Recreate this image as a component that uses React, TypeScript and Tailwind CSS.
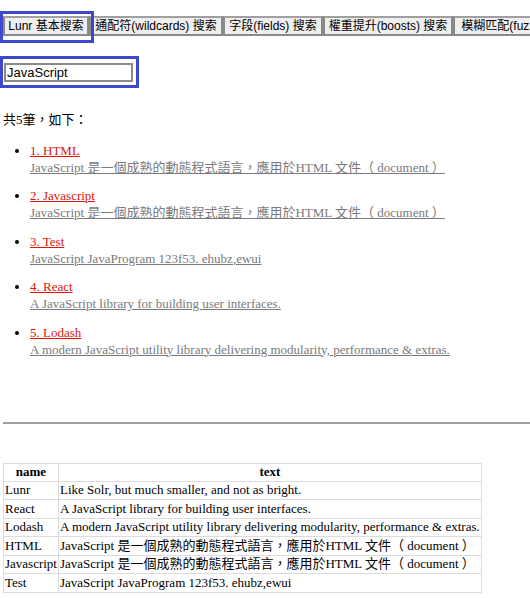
import React from "react";

const serif = { fontFamily: '"Liberation Serif", "Noto Sans CJK TC", serif' };
const sans = { fontFamily: '"Liberation Sans", "Noto Sans CJK TC", sans-serif' };

const items = [
  { t: "1. HTML", d: "JavaScript 是一個成熟的動態程式語言，應用於HTML 文件（ document ）" },
  { t: "2. Javascript", d: "JavaScript 是一個成熟的動態程式語言，應用於HTML 文件（ document ）" },
  { t: "3. Test", d: "JavaScript JavaProgram 123f53. ehubz,ewui" },
  { t: "4. React", d: "A JavaScript library for building user interfaces." },
  { t: "5. Lodash", d: "A modern JavaScript utility library delivering modularity, performance & extras." },
];

const rows = [
  ["Lunr", "Like Solr, but much smaller, and not as bright."],
  ["React", "A JavaScript library for building user interfaces."],
  ["Lodash", "A modern JavaScript utility library delivering modularity, performance & extras."],
  ["HTML", "JavaScript 是一個成熟的動態程式語言，應用於HTML 文件（ document ）"],
  ["Javascript", "JavaScript 是一個成熟的動態程式語言，應用於HTML 文件（ document ）"],
  ["Test", "JavaScript JavaProgram 123f53. ehubz,ewui"],
];

const tabs: [string, string][] = [
  ["Lunr 基本搜索", "w-[86px]"],
  ["通配符(wildcards) 搜索", "w-[134px]"],
  ["字段(fields) 搜索", "w-[100px]"],
  ["權重提升(boosts) 搜索", "w-[130px]"],
  ["模糊匹配(fuzzy) 搜索", "w-[128px]"],
];

export default function App() {
  return (
    <div className="relative w-[530px] h-[598px] overflow-hidden bg-white text-black text-[13px]" style={serif}>
      <div className="flex flex-col px-[3px] pt-[16px]">
        <div className="flex flex-nowrap whitespace-nowrap">
          {tabs.map(([t, w]) => (
            <button
              key={t}
              className={`${w} shrink-0 h-[20px] px-0 overflow-hidden border-2 border-[#8a8a8a] border-t-[#a0a0a0] bg-[#efefef] text-[12px] leading-[16px] text-black text-center`}
              style={sans}
            >
              {t}
            </button>
          ))}
        </div>
        <div className="mt-[27px] pl-[1px]">
          <input
            readOnly
            value="JavaScript"
            className="w-[129px] h-[19px] border-2 border-[#8a8a8a] px-[1px] text-[13px] leading-[15px] outline-none"
            style={sans}
          />
        </div>
        <p className="mt-[28px] leading-[17px]">共5筆，如下：</p>
        <ul className="mt-[14px] list-disc pl-[27px] flex flex-col gap-[11.5px]">
          {items.map((it) => (
            <li key={it.t} className="leading-[17px]">
              <a className="underline text-[#e0140a]">{it.t}</a>
              <br />
              <a className="underline text-[#7a7a7a]">{it.d}</a>
            </li>
          ))}
        </ul>
        <hr className="mt-[64px] -mr-[3px] border-0 border-t-2 border-[#a0a0a0]" />
        <table className="mt-[39px] border-collapse w-[478px] border border-[#dcdcdc]">
          <thead>
            <tr>
              <th className="border border-[#dcdcdc] h-[18px] px-[1px] font-bold text-center w-[57px] leading-[16px]">name</th>
              <th className="border border-[#dcdcdc] h-[18px] px-[1px] font-bold text-center leading-[16px]">text</th>
            </tr>
          </thead>
          <tbody>
            {rows.map((r) => (
              <tr key={r[0]}>
                <td className="border border-[#dcdcdc] h-[18.5px] px-[1px] leading-[16px] whitespace-nowrap">{r[0]}</td>
                <td className="border border-[#dcdcdc] h-[18.5px] px-[1px] leading-[16px] whitespace-nowrap">{r[1]}</td>
              </tr>
            ))}
          </tbody>
        </table>
      </div>
      <div className="absolute left-0 top-[11px] w-[94px] h-[32px] border-[3.5px] border-[#3f47cc] pointer-events-none" />
      <div className="absolute left-0 top-[56px] w-[139px] h-[32px] border-[3.5px] border-[#3f47cc] pointer-events-none" />
    </div>
  );
}
